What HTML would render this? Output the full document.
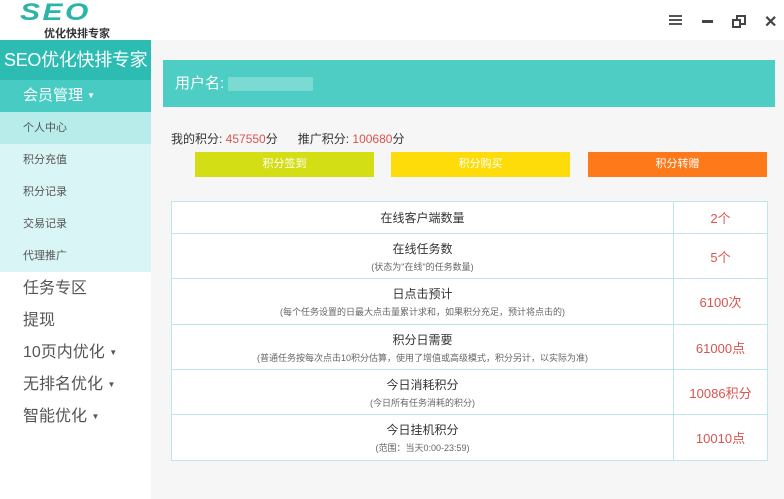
<!DOCTYPE html>
<html><head><meta charset="utf-8"><style>
*{margin:0;padding:0;box-sizing:border-box}
body{width:784px;height:499px;overflow:hidden;background:#f6f6f6;font-family:"Liberation Sans","Noto Sans CJK SC",sans-serif;position:relative}
.hdr{position:absolute;left:0;top:0;width:784px;height:40px;background:#fff}
.logo{position:absolute;left:20px;top:2px;font:italic 900 24px/22px "Liberation Sans",sans-serif;color:#2bb5a8;letter-spacing:2px;transform:scaleX(1.25);transform-origin:left}
.logo2{position:absolute;left:44px;top:25px;font-size:11px;font-weight:bold;color:#333}
.side{position:absolute;left:0;top:40px;width:151px;height:459px;background:#fff}
.t1{height:40px;background:#2cbcb2;color:#fff;font-size:18px;line-height:40px;padding-left:4px;white-space:nowrap;letter-spacing:-0.3px}
.t2{height:32px;background:#48cbc3;color:#fff;font-size:15px;line-height:32px;padding-left:23px}
.sub{background:#d9f5f5}
.sub div{height:32px;line-height:32px;font-size:11px;color:#555;padding-left:23px}
.sub .on{background:#b8ecea}
.m{height:32px;line-height:32px;font-size:16px;color:#555;padding-left:23px}
.caret{font-size:8px;vertical-align:middle}
.ub{position:absolute;left:163px;top:60px;width:612px;height:47px;background:#4ecdc4;color:#fff;font-size:15px;line-height:47px;padding-left:12px}
.pts{position:absolute;left:171px;top:130px;font-size:12px;color:#333}
.pts span{color:#d9534f}
.btn{position:absolute;top:152px;height:25px;width:179px;color:#fff;font-size:11px;text-align:center;line-height:25px}
table{position:absolute;left:171px;top:201px;width:597px;border-collapse:collapse;background:#fff}
td{border:1px solid #bfe6ea;text-align:center;font-size:12px;color:#333}
td.v{width:94px;color:#d9534f;font-size:13px}
td small{display:block;font-size:9px;color:#666;margin-top:3px}
</style></head><body>
<div class="hdr">
<div class="logo">SEO</div>
<div class="logo2">优化快排专家</div>
<svg style="position:absolute;left:669px;top:15px" width="13" height="11"><rect x="0" y="0" width="13" height="2" fill="#555"/><rect x="0" y="4" width="13" height="2" fill="#555"/><rect x="0" y="8" width="13" height="2" fill="#555"/></svg>
<div style="position:absolute;left:702px;top:20px;width:11px;height:3px;background:#444"></div>
<svg style="position:absolute;left:732px;top:15px" width="14" height="13"><rect x="1" y="5" width="7" height="7" fill="none" stroke="#444" stroke-width="2"/><path d="M5 4V1h8v8h-4" fill="none" stroke="#444" stroke-width="2"/></svg>
<div style="position:absolute;left:764px;top:12px;font-size:16px;font-weight:bold;color:#444">✕</div>
</div>
<div class="side">
<div class="t1">SEO优化快排专家</div>
<div class="t2">会员管理 <span class="caret">▼</span></div>
<div class="sub"><div class="on">个人中心</div><div>积分充值</div><div>积分记录</div><div>交易记录</div><div>代理推广</div></div>
<div class="m" style="margin-top:1px">任务专区</div>
<div class="m">提现</div>
<div class="m">10页内优化 <span class="caret">▼</span></div>
<div class="m">无排名优化 <span class="caret">▼</span></div>
<div class="m">智能优化 <span class="caret">▼</span></div>
</div>
<div class="ub">用户名: <span style="display:inline-block;width:85px;height:14px;background:#8fdfd9;vertical-align:middle;opacity:.7"></span></div>
<div class="pts">我的积分: <span>457550</span>分 &nbsp;&nbsp;&nbsp;&nbsp; 推广积分: <span>100680</span>分</div>
<div class="btn" style="left:195px;background:#d4de14">积分签到</div>
<div class="btn" style="left:391px;background:#fddc0a">积分购买</div>
<div class="btn" style="left:588px;background:#fd7919">积分转赠</div>
<table>
<tr style="height:32px"><td>在线客户端数量</td><td class="v">2个</td></tr>
<tr style="height:45px"><td>在线任务数<small>(状态为"在线"的任务数量)</small></td><td class="v">5个</td></tr>
<tr style="height:46px"><td>日点击预计<small>(每个任务设置的日最大点击量累计求和，如果积分充足，预计将点击的)</small></td><td class="v">6100次</td></tr>
<tr style="height:45px"><td>积分日需要<small>(普通任务按每次点击10积分估算，使用了增值或高级模式，积分另计，以实际为准)</small></td><td class="v">61000点</td></tr>
<tr style="height:45px"><td>今日消耗积分<small>(今日所有任务消耗的积分)</small></td><td class="v">10086积分</td></tr>
<tr style="height:46px"><td>今日挂机积分<small>(范围：当天0:00-23:59)</small></td><td class="v">10010点</td></tr>
</table>
</body></html>
